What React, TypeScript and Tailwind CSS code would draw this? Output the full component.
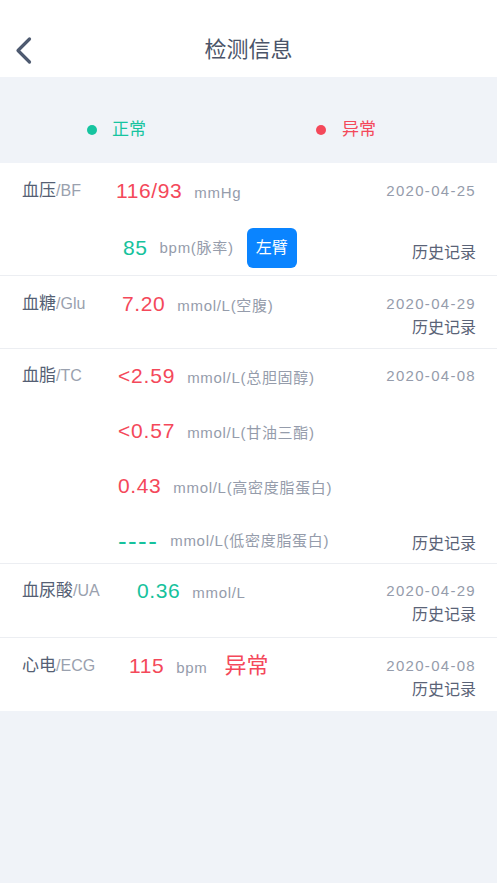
import React from 'react'

const FONT = { fontFamily: '"Liberation Sans", "Noto Sans CJK SC", sans-serif' }

function Label({ cn, en, w }: { cn: string; en: string; w: string }) {
  return (
    <div className={`${w} shrink-0 flex items-baseline h-[24px] leading-[24px]`}>
      <span className="text-[17px] text-[#555f74]">{cn}</span>
      <span className="text-[16px] text-[#9aa1ae]">/{en}</span>
    </div>
  )
}

function Unit({ children }: { children: React.ReactNode }) {
  return <span className="ml-[12px] text-[15px] leading-[24px] tracking-[0.7px] text-[#959cab]">{children}</span>
}

function History() {
  return <span className="text-[16px] leading-[24px] text-[#5a6377]">历史记录</span>
}

function DateText({ children }: { children: React.ReactNode }) {
  return <span className="text-[15px] leading-[24px] tracking-[1.3px] text-[#959cab]">{children}</span>
}

export default function App() {
  return (
    <div className="min-h-screen bg-[#f0f3f8]" style={FONT}>
      {/* Header */}
      <header className="relative h-[77px] bg-white flex items-end justify-center pb-[14px]">
        <button className="absolute left-[13px] top-[36px] p-0" aria-label="back">
          <svg width="20" height="30" viewBox="0 0 20 30" fill="none">
            <path d="M16.5 3 L5 14.5 L16.5 26" stroke="#4e5a70" strokeWidth="3.2" strokeLinecap="round" strokeLinejoin="round" />
          </svg>
        </button>
        <h1 className="text-[22px] leading-[26px] text-[#4a5468]">检测信息</h1>
      </header>

      {/* Legend */}
      <div className="h-[86px] flex items-center pt-[20px] pl-[87px]">
        <div className="w-[229px] flex items-center">
          <span className="w-[10px] h-[10px] rounded-full bg-[#16c4a0]" />
          <span className="ml-[15px] text-[17px] text-[#16c4a0]">正常</span>
        </div>
        <div className="flex items-center">
          <span className="w-[10px] h-[10px] rounded-full bg-[#f4485a]" />
          <span className="ml-[16px] text-[17px] text-[#f4485a]">异常</span>
        </div>
      </div>

      {/* 血压 */}
      <div className="bg-white flex pl-[22px] pr-[21px] pt-[16px] pb-[7px] border-b border-[#eceef2]">
        <Label cn="血压" en="BF" w="w-[94px]" />
        <div className="flex flex-col gap-[25px]">
          <div className="flex items-baseline h-[24px] leading-[24px]">
            <span className="text-[21px] tracking-[0.6px] text-[#f4485a]">116/93</span>
            <Unit>mmHg</Unit>
          </div>
          <div className="flex items-center h-[40px] pl-[7px]">
            <span className="text-[21px] tracking-[0.6px] text-[#16c29c]">85</span>
            <Unit>bpm(脉率)</Unit>
            <span className="ml-[13px] w-[50px] h-[40px] rounded-[6px] bg-[#0a84ff] text-white text-[16px] flex items-center justify-center">左臂</span>
          </div>
        </div>
        <div className="ml-auto flex flex-col items-end justify-between">
          <DateText>2020-04-25</DateText>
          <div className="mb-[3px]"><History /></div>
        </div>
      </div>

      {/* 血糖 */}
      <div className="bg-white flex pl-[22px] pr-[21px] pt-[16px] pb-[8px] border-b border-[#eceef2]">
        <Label cn="血糖" en="Glu" w="w-[100px]" />
        <div className="flex items-baseline h-[24px] leading-[24px]">
          <span className="text-[21px] tracking-[0.6px] text-[#f4485a]">7.20</span>
          <Unit>mmol/L(空腹)</Unit>
        </div>
        <div className="ml-auto flex flex-col items-end">
          <DateText>2020-04-29</DateText>
          <History />
        </div>
      </div>

      {/* 血脂 */}
      <div className="bg-white flex pl-[22px] pr-[21px] pt-[15px] pb-[7px] border-b border-[#eceef2]">
        <Label cn="血脂" en="TC" w="w-[96px]" />
        <div className="flex flex-col gap-[31px] pb-[3px]">
          <div className="flex items-baseline h-[24px] leading-[24px]">
            <span className="text-[21px] tracking-[0.8px] text-[#f4485a]">&lt;2.59</span>
            <Unit>mmol/L(总胆固醇)</Unit>
          </div>
          <div className="flex items-baseline h-[24px] leading-[24px]">
            <span className="text-[21px] tracking-[0.8px] text-[#f4485a]">&lt;0.57</span>
            <Unit>mmol/L(甘油三酯)</Unit>
          </div>
          <div className="flex items-baseline h-[24px] leading-[24px]">
            <span className="text-[21px] tracking-[0.6px] text-[#f4485a]">0.43</span>
            <Unit>mmol/L(高密度脂蛋白)</Unit>
          </div>
          <div className="flex items-center h-[24px]">
            <span className="text-[26px] leading-[24px] tracking-[1.4px] text-[#16c29c]">----</span>
            <Unit>mmol/L(低密度脂蛋白)</Unit>
          </div>
        </div>
        <div className="ml-auto flex flex-col items-end justify-between">
          <DateText>2020-04-08</DateText>
          <History />
        </div>
      </div>

      {/* 血尿酸 */}
      <div className="bg-white flex pl-[22px] pr-[21px] pt-[15px] pb-[10px] border-b border-[#eceef2]">
        <Label cn="血尿酸" en="UA" w="w-[115px]" />
        <div className="flex items-baseline h-[24px] leading-[24px]">
          <span className="text-[21px] tracking-[0.6px] text-[#16c29c]">0.36</span>
          <Unit>mmol/L</Unit>
        </div>
        <div className="ml-auto flex flex-col items-end">
          <DateText>2020-04-29</DateText>
          <History />
        </div>
      </div>

      {/* 心电 */}
      <div className="bg-white flex pl-[22px] pr-[21px] pt-[16px] pb-[9px]">
        <Label cn="心电" en="ECG" w="w-[107px]" />
        <div className="flex items-baseline h-[24px] leading-[24px]">
          <span className="text-[21px] tracking-[0.6px] text-[#f4485a]">115</span>
          <Unit>bpm</Unit>
          <span className="ml-[17px] text-[22px] text-[#f4485a]">异常</span>
        </div>
        <div className="ml-auto flex flex-col items-end">
          <DateText>2020-04-08</DateText>
          <History />
        </div>
      </div>
    </div>
  )
}
